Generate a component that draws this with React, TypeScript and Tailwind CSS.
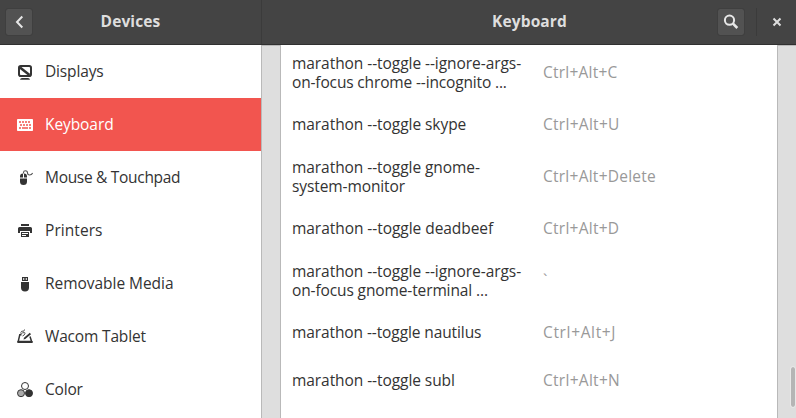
import type { ReactNode } from "react";

const DisplaysIcon = () => (
  <svg width="16" height="16" viewBox="0 0 16 16" fill="none">
    <rect x="2" y="2" width="12" height="10" rx="1.8" stroke="#333" strokeWidth="2" />
    <path d="M3 3.500L12.500 11" stroke="#333" strokeWidth="2.500" />
    <path d="M3 15.700Q3.300 14 5 14H11Q12.700 14 13 15.700Z" fill="#333" />
  </svg>
);

const KeyboardIcon = () => (
  <svg width="16" height="16" viewBox="0 0 16 16">
    <rect x="0" y="2" width="16" height="12" rx="0.8" fill="#fff" />
    <path
      d="M2 5h2M5 5h2M8 5h2M11 5h2M3 8h2M6 8h2M9 8h2M12 8h2M2 11h2M5 11h6M12 11h2"
      stroke="#f2554f"
      strokeWidth="1.7"
    />
  </svg>
);

const MouseIcon = () => (
  <svg width="16" height="16" viewBox="0 0 16 16" fill="none">
    <path d="M3 7.500V6.500Q3 3.500 6 3.500V7.500ZM7 3.500Q10 3.500 10 6.500V7.500H7ZM3 8.500H10V11.500Q10 15 6.500 15T3 11.500Z" fill="#333" />
    <path d="M6.500 3.500V2.400Q6.500 0.700 8.500 0.700T10.500 2.800T12.500 5Q14.800 5 15.600 3" stroke="#555" strokeWidth="1.100" />
  </svg>
);

const PrinterIcon = () => (
  <svg width="16" height="16" viewBox="0 0 16 16" fill="#333">
    <path d="M4 1h8v2H4Z" />
    <path d="M2.5 4h11Q15 4 15 5.5V10H13V8H3v2H1V5.500Q1 4 2.500 4Z" />
    <path fillRule="evenodd" d="M4 9h8v5H4ZM5 10v1h6v-1ZM5 12v1h4v-1Z" />
  </svg>
);

const UsbIcon = () => (
  <svg width="16" height="16" viewBox="0 0 16 16" fill="#333">
    <path fillRule="evenodd" d="M5 1h6v4H5ZM6 2.300v1.500h1.300V2.300ZM8.700 2.300v1.500H10V2.300Z" />
    <path d="M4 6h8v5.500Q12 15.500 8 15.500T4 11.500Z" />
  </svg>
);

const TabletIcon = () => (
  <svg width="16" height="16" viewBox="0 0 16 16" fill="none">
    <path d="M4.500 5.700H2.800L1.200 12.500H14.600L13 7.500" stroke="#333" strokeWidth="1.500" />
    <path d="M0.400 12H15.600V14H0.400Z" fill="#333" />
    <path d="M6.500 10.500L7 8.800L12.800 3.800L14 5.200L8.300 10Z" fill="#333" />
    <path d="M3.500 3.500Q5 1.500 6 2.200T7.500 0.500M3.500 4.600Q8.500 2.600 8 4.500T5.500 7" stroke="#555" strokeWidth="1" />
  </svg>
);

const ColorIcon = () => (
  <svg width="16" height="16" viewBox="0 0 16 16" stroke="#333">
    <circle cx="8" cy="4" r="3.500" fill="#fff" />
    <circle cx="4" cy="11.200" r="3.500" fill="#aaa" />
    <circle cx="12" cy="11.200" r="3.500" fill="#333" />
  </svg>
);

const sections: { label: string; icon: ReactNode; tracking: string }[] = [
  { label: "Displays", icon: <DisplaysIcon />, tracking: "tracking-[-0.15px]" },
  { label: "Keyboard", icon: <KeyboardIcon />, tracking: "tracking-[-0.08px]" },
  { label: "Mouse & Touchpad", icon: <MouseIcon />, tracking: "tracking-[-0.3px]" },
  { label: "Printers", icon: <PrinterIcon />, tracking: "tracking-[0.06px]" },
  { label: "Removable Media", icon: <UsbIcon />, tracking: "tracking-[-0.04px]" },
  { label: "Wacom Tablet", icon: <TabletIcon />, tracking: "tracking-[-0.17px]" },
  { label: "Color", icon: <ColorIcon />, tracking: "tracking-[-0.2px]" },
];

const shortcuts: { lines: [string, string][]; keys: string; keyTracking: string }[] = [
  {
    lines: [
      ["marathon --toggle --ignore-args-", "tracking-[-0.06px]"],
      ["on-focus chrome --incognito ...", "tracking-[-0.15px]"],
    ],
    keys: "Ctrl+Alt+C",
    keyTracking: "tracking-[0.22px]",
  },
  { lines: [["marathon --toggle skype", "tracking-[-0.06px]"]], keys: "Ctrl+Alt+U", keyTracking: "tracking-[0.28px]" },
  {
    lines: [
      ["marathon --toggle gnome-", "tracking-[-0.06px]"],
      ["system-monitor", "tracking-[-0.1px]"],
    ],
    keys: "Ctrl+Alt+Delete",
    keyTracking: "tracking-[0.25px]",
  },
  { lines: [["marathon --toggle deadbeef", "tracking-[-0.05px]"]], keys: "Ctrl+Alt+D", keyTracking: "tracking-[0.26px]" },
  {
    lines: [
      ["marathon --toggle --ignore-args-", "tracking-[-0.06px]"],
      ["on-focus gnome-terminal ...", "tracking-[-0.12px]"],
    ],
    keys: "`",
    keyTracking: "tracking-[0px]",
  },
  { lines: [["marathon --toggle nautilus", "tracking-[-0.1px]"]], keys: "Ctrl+Alt+J", keyTracking: "tracking-[0.65px]" },
  { lines: [["marathon --toggle subl", "tracking-[-0.07px]"]], keys: "Ctrl+Alt+N", keyTracking: "tracking-[0.28px]" },
];

export default function App() {
  return (
    <div className="flex h-[418px] w-[796px] flex-col overflow-hidden bg-white font-['Open_Sans','Noto_Sans',sans-serif] text-[15.5px] text-[#333]">
      <header className="flex h-[45px] shrink-0 border-b border-[#303030] bg-[#444] font-bold text-[#dedede]">
        <div className="flex w-[262px] items-center border-r border-[#3b3b3b] px-[6px]">
          <button className="flex size-[26px] items-center justify-center rounded-xs bg-[#525252] outline outline-[#3f3f3f]">
            <svg width="26" height="26" viewBox="0 0 26 26" fill="none">
              <path d="M16.300 7.500L11 13L16.300 18.500" stroke="#e6e6e6" strokeWidth="2" />
            </svg>
          </button>
          <h1 className="flex-1 pr-[26px] text-center tracking-[0.12px]">Devices</h1>
        </div>
        <div className="flex flex-1 items-center pr-[6px]">
          <h1 className="flex-1 pl-[79px] text-center tracking-[0.13px]">Keyboard</h1>
          <button className="flex size-[26px] items-center justify-center rounded-xs bg-[#525252] outline outline-[#3f3f3f]">
            <svg width="26" height="26" viewBox="0 0 26 26" fill="none" stroke="#e8e8e8">
              <circle cx="11.500" cy="11.200" r="4.600" strokeWidth="2" />
              <path d="M15 14.700L19.300 19" strokeWidth="2.600" />
            </svg>
          </button>
          <div className="ml-[12px] h-[28px] w-px bg-[#3b3b3b]" />
          <button className="ml-[7px] flex size-[26px] items-center justify-center">
            <svg width="10" height="10" viewBox="0 0 10 10">
              <path d="M1.500 1.500L8.500 8.500M8.500 1.500L1.500 8.500" stroke="#dedede" strokeWidth="2" />
            </svg>
          </button>
        </div>
      </header>
      <main className="flex min-h-0 flex-1">
        <nav className="w-[261px] shrink-0 overflow-hidden">
          {sections.map(({ label, icon, tracking }) => (
            <div
              key={label}
              className={`flex h-[53px] items-center gap-3 pl-[17px] ${label === "Keyboard" ? "bg-[#f2554f] text-white" : ""}`}
            >
              {icon}
              <span className={tracking}>{label}</span>
            </div>
          ))}
        </nav>
        <div className="flex min-w-0 flex-1 border-t border-l border-[#b9b9b9] bg-[#dedede] pl-[18px]">
          <section className="-mt-px w-[498px] shrink-0 overflow-hidden border-x border-[#b9b9b9] bg-white">
            <div className="-mt-px">
              {shortcuts.map(({ lines, keys, keyTracking }, i) => (
                <div key={i} className={`flex items-center pl-[11px] ${lines.length > 1 ? "h-[56px]" : "h-[48px]"}`}>
                  <div className={`w-[251px] leading-[19px] whitespace-nowrap ${lines.length > 1 ? "pt-[2px]" : ""}`}>
                    {lines.map(([text, tracking]) => (
                      <div key={text} className={tracking}>{text}</div>
                    ))}
                  </div>
                  <span className={`pt-[2px] text-[#999] ${keyTracking}`}>{keys}</span>
                </div>
              ))}
            </div>
          </section>
          <div className="flex flex-1 items-end justify-end pr-px pb-[11px]">
            <div className="h-[40px] w-[4px] rounded-full bg-[#b5b5b5] outline outline-[#e8e8e8]" />
          </div>
        </div>
      </main>
    </div>
  );
}
